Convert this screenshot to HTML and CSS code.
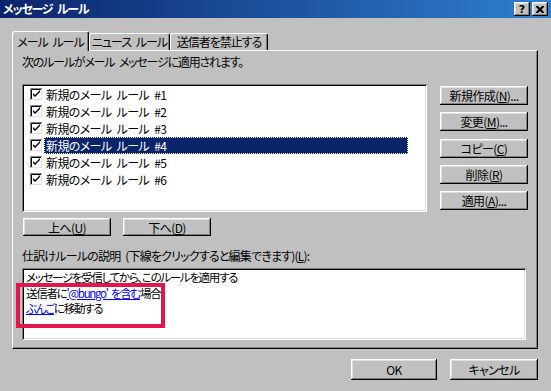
FILE: index.html
```html
<!DOCTYPE html>
<html lang="ja">
<head>
<meta charset="UTF-8">
<title>メッセージ ルール</title>
<link rel="stylesheet" href="styles.css">
</head>
<body>
<div class="titlebar">
  <span class="title">メッセージ ルール</span>
  <span class="tb-buttons">
    <span class="tb-btn">?</span>
    <span class="tb-btn"><svg width="8" height="7" viewBox="0 0 8 7"><path d="M0 0h2l2 2 2-2h2v1l-2.5 2.5L8 6v1H6L4 5 2 7H0V6l2.5-2.5L0 1z" fill="#000"/></svg></span>
  </span>
</div>
<div class="content">
  <div class="tabs">
    <div class="tab active">メール ルール</div>
    <div class="tab news">ニュース ルール</div>
    <div class="tab block">送信者を禁止する</div>
  </div>
  <div class="panel">
    <p class="caption intro">次のルールがメール メッセージに適用されます。</p>
    <div class="rules-row">
      <ul class="listbox">
        <li><svg class="check" width="13" height="13" viewBox="0 0 13 13"><rect x="2" y="2" width="9" height="9" fill="#fff"/><path d="M0.5 12V0.5H12" stroke="#808080" fill="none"/><path d="M1.5 11V1.5H11" stroke="#000" fill="none"/><path d="M0.5 12.5H12.5V0.5" stroke="#fff" fill="none"/><path d="M1.5 11.5H11.5V1.5" stroke="#dfdfdf" fill="none"/><path d="M3 5v2l2 2 5-5V2L5 7z" fill="#000"/></svg><span class="rule">新規のメール ルール #1</span></li>
        <li><svg class="check" width="13" height="13" viewBox="0 0 13 13"><rect x="2" y="2" width="9" height="9" fill="#fff"/><path d="M0.5 12V0.5H12" stroke="#808080" fill="none"/><path d="M1.5 11V1.5H11" stroke="#000" fill="none"/><path d="M0.5 12.5H12.5V0.5" stroke="#fff" fill="none"/><path d="M1.5 11.5H11.5V1.5" stroke="#dfdfdf" fill="none"/><path d="M3 5v2l2 2 5-5V2L5 7z" fill="#000"/></svg><span class="rule">新規のメール ルール #2</span></li>
        <li><svg class="check" width="13" height="13" viewBox="0 0 13 13"><rect x="2" y="2" width="9" height="9" fill="#fff"/><path d="M0.5 12V0.5H12" stroke="#808080" fill="none"/><path d="M1.5 11V1.5H11" stroke="#000" fill="none"/><path d="M0.5 12.5H12.5V0.5" stroke="#fff" fill="none"/><path d="M1.5 11.5H11.5V1.5" stroke="#dfdfdf" fill="none"/><path d="M3 5v2l2 2 5-5V2L5 7z" fill="#000"/></svg><span class="rule">新規のメール ルール #3</span></li>
        <li><svg class="check" width="13" height="13" viewBox="0 0 13 13"><rect x="2" y="2" width="9" height="9" fill="#fff"/><path d="M0.5 12V0.5H12" stroke="#808080" fill="none"/><path d="M1.5 11V1.5H11" stroke="#000" fill="none"/><path d="M0.5 12.5H12.5V0.5" stroke="#fff" fill="none"/><path d="M1.5 11.5H11.5V1.5" stroke="#dfdfdf" fill="none"/><path d="M3 5v2l2 2 5-5V2L5 7z" fill="#000"/></svg><span class="rule selected">新規のメール ルール #4</span></li>
        <li><svg class="check" width="13" height="13" viewBox="0 0 13 13"><rect x="2" y="2" width="9" height="9" fill="#fff"/><path d="M0.5 12V0.5H12" stroke="#808080" fill="none"/><path d="M1.5 11V1.5H11" stroke="#000" fill="none"/><path d="M0.5 12.5H12.5V0.5" stroke="#fff" fill="none"/><path d="M1.5 11.5H11.5V1.5" stroke="#dfdfdf" fill="none"/><path d="M3 5v2l2 2 5-5V2L5 7z" fill="#000"/></svg><span class="rule">新規のメール ルール #5</span></li>
        <li><svg class="check" width="13" height="13" viewBox="0 0 13 13"><rect x="2" y="2" width="9" height="9" fill="#fff"/><path d="M0.5 12V0.5H12" stroke="#808080" fill="none"/><path d="M1.5 11V1.5H11" stroke="#000" fill="none"/><path d="M0.5 12.5H12.5V0.5" stroke="#fff" fill="none"/><path d="M1.5 11.5H11.5V1.5" stroke="#dfdfdf" fill="none"/><path d="M3 5v2l2 2 5-5V2L5 7z" fill="#000"/></svg><span class="rule">新規のメール ルール #6</span></li>
      </ul>
      <div class="side-buttons">
        <button class="btn">新規作成(<u>N</u>)...</button>
        <button class="btn">変更(<u>M</u>)...</button>
        <button class="btn">コピー(<u>C</u>)</button>
        <button class="btn">削除(<u>R</u>)</button>
        <button class="btn">適用(<u>A</u>)...</button>
      </div>
    </div>
    <div class="move-buttons">
      <button class="btn">上へ(<u>U</u>)</button>
      <button class="btn">下へ(<u>D</u>)</button>
    </div>
    <p class="caption label">仕訳けルールの説明 (下線をクリックすると編集できます)(<u>L</u>):</p>
    <div class="desc">
      <div>メッセージを受信してから、このルールを適用する</div>
      <div>送信者に<a href="#">'@bungo' を含む</a>場合</div>
      <div><a href="#">ぶんご</a>に移動する</div>
    </div>
  </div>
  <div class="footer">
    <button class="btn ok">OK</button>
    <button class="btn cancel">キャンセル</button>
  </div>
</div>
<div class="mark"></div>
</body>
</html>
```

FILE: styles.css
```css
body { margin: 0; width: 551px; height: 391px; overflow: hidden; position: relative; background: #c0c0c0; font-family: "MS UI Gothic", "Noto Sans CJK JP", sans-serif; font-size: 12px; color: #000; font-feature-settings: "palt"; letter-spacing: -0.8px; word-spacing: 3px; white-space: nowrap; }
.titlebar { height: 18px; box-sizing: border-box; padding: 0 3px 0 3px; display: flex; align-items: center; justify-content: space-between; background: linear-gradient(to right, #0a246a, #2f7fd0); color: #fff; font-weight: bold; }
.title { font-size: 12px; line-height: 18px; letter-spacing: -1.2px; }
.tb-buttons { display: flex; gap: 2px; }
.tb-btn { width: 16px; height: 14px; box-sizing: border-box; display: flex; align-items: center; justify-content: center; background: #c0c0c0; color: #000; font-family: "DejaVu Sans", sans-serif; font-size: 11px; font-weight: bold; letter-spacing: 0; box-shadow: inset -1px -1px #000, inset 1px 1px #fff, inset -2px -2px #808080, inset 2px 2px #dfdfdf; }
.content { padding: 13px 13px 0 12px; }
.tabs { display: flex; height: 19px; align-items: flex-end; }
.tab { position: relative; height: 17px; box-sizing: border-box; padding: 0; text-align: center; line-height: 16px; letter-spacing: -1px; border-top: 1px solid #fff; border-left: 1px solid #fff; border-right: 1px solid #000; border-radius: 3px 3px 0 0; box-shadow: inset -1px 0 #808080; }
.tab.active { width: 77px; height: 20px; margin-bottom: -1px; line-height: 19px; z-index: 1; background: #c0c0c0; }
.tab.news { width: 81px; }
.tab.block { width: 98px; }
.panel { width: 526px; height: 299px; box-sizing: border-box; padding: 4px 9px 0 9px; border: 1px solid; border-color: #fff #000 #000 #fff; box-shadow: inset -1px -1px #808080; }
.caption { margin: 0; line-height: 14px; }
.intro { letter-spacing: -1.2px; }
.rules-row { display: flex; gap: 13px; margin-top: 15px; }
.listbox { list-style: none; margin: 0; width: 405px; height: 128px; box-sizing: border-box; padding: 2px 2px; background: #fff; box-shadow: inset 1px 1px #808080, inset -1px -1px #fff, inset 2px 2px #000, inset -2px -2px #dfdfdf; }
.listbox li { display: flex; align-items: center; height: 17px; padding: 0 17px 0 6px; }
.check { flex: none; }
.rule { flex: 1; height: 17px; line-height: 17px; padding-left: 2px; margin-left: 1px; letter-spacing: -0.6px; }
.rule.selected { background: #0a246a; color: #fff; outline: 1px dotted #ffffc0; outline-offset: -1px; }
.side-buttons { display: flex; flex-direction: column; gap: 7.3px; padding-top: 2px; }
.btn { width: 88px; height: 19px; padding: 0; border: 0; background: #c0c0c0; font-family: inherit; font-size: 12px; font-feature-settings: "palt"; letter-spacing: -0.6px; color: #000; box-shadow: inset -1px -1px #000, inset 1px 1px #fff, inset -2px -2px #808080, inset 2px 2px #dfdfdf; }
.btn u { text-underline-offset: 1px; }
.move-buttons { display: flex; gap: 12px; margin: 6px 0 0 1px; }
.move-buttons .btn { height: 18px; }
.label { margin-top: 13px; }
.desc { width: 504px; height: 72px; box-sizing: border-box; margin-top: 5px; padding: 2px 4px; font-size: 11.5px; line-height: 15.5px; letter-spacing: -1.3px; word-spacing: 2px; background: #fff; box-shadow: inset 1px 1px #808080, inset -1px -1px #fff, inset 2px 2px #000, inset -2px -2px #dfdfdf; }
.desc a { color: #0000ff; text-decoration: underline; }
.footer { display: flex; justify-content: flex-end; gap: 13px; margin-top: 10px; }
.footer .btn { height: 21px; }
.footer .ok { width: 86px; }
.mark { position: absolute; left: 16px; top: 283px; width: 149px; height: 45px; box-sizing: border-box; border: 4px solid #e2164b; }
```
